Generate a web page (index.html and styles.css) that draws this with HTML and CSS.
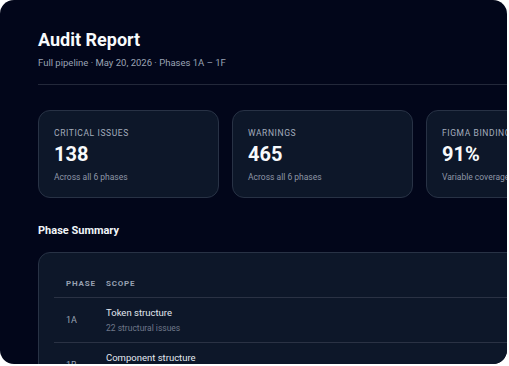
FILE: index.html
```html
<!DOCTYPE html>
<html lang="en">
<head>
    <meta charset="UTF-8">
    <meta name="viewport" content="width=device-width, initial-scale=1.0">
    <title>Audit Report</title>
    <link rel="stylesheet" href="styles.css">
</head>
<body>

    <div class="frame">
        <div class="page">
            <header class="header">
                <h1 class="title">Audit Report</h1>
                <p class="subtitle">Full pipeline · May 20, 2026 · Phases 1A – 1F</p>
            </header>

            <div class="stats">
                <div class="stat">
                    <div class="stat-label">Critical issues</div>
                    <div class="stat-value">138</div>
                    <div class="stat-note">Across all 6 phases</div>
                </div>
                <div class="stat">
                    <div class="stat-label">Warnings</div>
                    <div class="stat-value">465</div>
                    <div class="stat-note">Across all 6 phases</div>
                </div>
                <div class="stat">
                    <div class="stat-label">Figma bindings</div>
                    <div class="stat-value">91%</div>
                    <div class="stat-note">Variable coverage</div>
                </div>
            </div>

            <h2 class="section-title">Phase Summary</h2>

            <div class="summary">
                <div class="row head">
                    <div>Phase</div>
                    <div>Scope</div>
                </div>
                <div class="row">
                    <div class="phase">1A</div>
                    <div>
                        <div class="scope">Token structure</div>
                        <div class="scope-note">22 structural issues</div>
                    </div>
                </div>
                <div class="row">
                    <div class="phase">1B</div>
                    <div>
                        <div class="scope">Component structure</div>
                        <div class="scope-note">31 structural issues</div>
                    </div>
                </div>
            </div>
        </div>
    </div>

</body>
</html>
```

FILE: styles.css
```css
body {
    margin: 0;
    background: #ffffff;
    font-family: Roboto, "Liberation Sans", sans-serif;
    overflow: hidden;
}

.frame {
    width: 507px;
    height: 364px;
    border-radius: 14px;
    background: #02061a;
    overflow: hidden;
}

.page {
    width: 720px;
    padding: 28px 0 0 38px;
    box-sizing: border-box;
}

.header {
    padding-bottom: 13px;
    border-bottom: 1px solid #23283a;
}

.title {
    margin: 0;
    font-size: 18px;
    line-height: 24px;
    font-weight: 700;
    color: #f8fafc;
}

.subtitle {
    margin: 3px 0 0;
    font-size: 9.5px;
    line-height: 16px;
    color: #9aa3b4;
}

.stats {
    display: grid;
    grid-template-columns: repeat(3, 181px);
    gap: 13px;
    margin-top: 25px;
}

.stat {
    height: 88px;
    box-sizing: border-box;
    padding: 16px 15px 14px;
    background: #0d1729;
    border: 1px solid #283245;
    border-radius: 12px;
}

.stat-label {
    font-size: 8.5px;
    line-height: 12px;
    letter-spacing: 0.6px;
    text-transform: uppercase;
    color: #a4adbd;
}

.stat-value {
    margin-top: 2px;
    font-size: 20px;
    line-height: 26px;
    font-weight: 700;
    color: #f8fafc;
}

.stat-note {
    margin-top: 3px;
    font-size: 8.5px;
    line-height: 14px;
    color: #8d96a7;
}

.section-title {
    margin: 25px 0 0;
    font-size: 11px;
    line-height: 16px;
    font-weight: 700;
    color: #f1f5f9;
}

.summary {
    margin-top: 13px;
    padding: 12px 15px;
    background: #0d1729;
    border: 1px solid #283245;
    border-radius: 12px;
}

.row {
    display: grid;
    grid-template-columns: 40px 1fr;
    align-items: center;
    padding: 0 12px;
    height: 44px;
    border-top: 1px solid #2a3244;
}

.row.head {
    height: 33px;
    box-sizing: border-box;
    padding-top: 5px;
    border-top: none;
    border-bottom: 1px solid #2a3244;
    font-size: 8px;
    font-weight: 700;
    letter-spacing: 0.8px;
    text-transform: uppercase;
    color: #97a0b1;
}

.row.head + .row {
    border-top: none;
}

.phase {
    font-size: 9px;
    color: #9aa3b4;
}

.scope {
    font-size: 9.5px;
    line-height: 15px;
    color: #e2e8f0;
}

.scope-note {
    margin-top: 1px;
    font-size: 8.5px;
    line-height: 15px;
    color: #6f7889;
}
```
